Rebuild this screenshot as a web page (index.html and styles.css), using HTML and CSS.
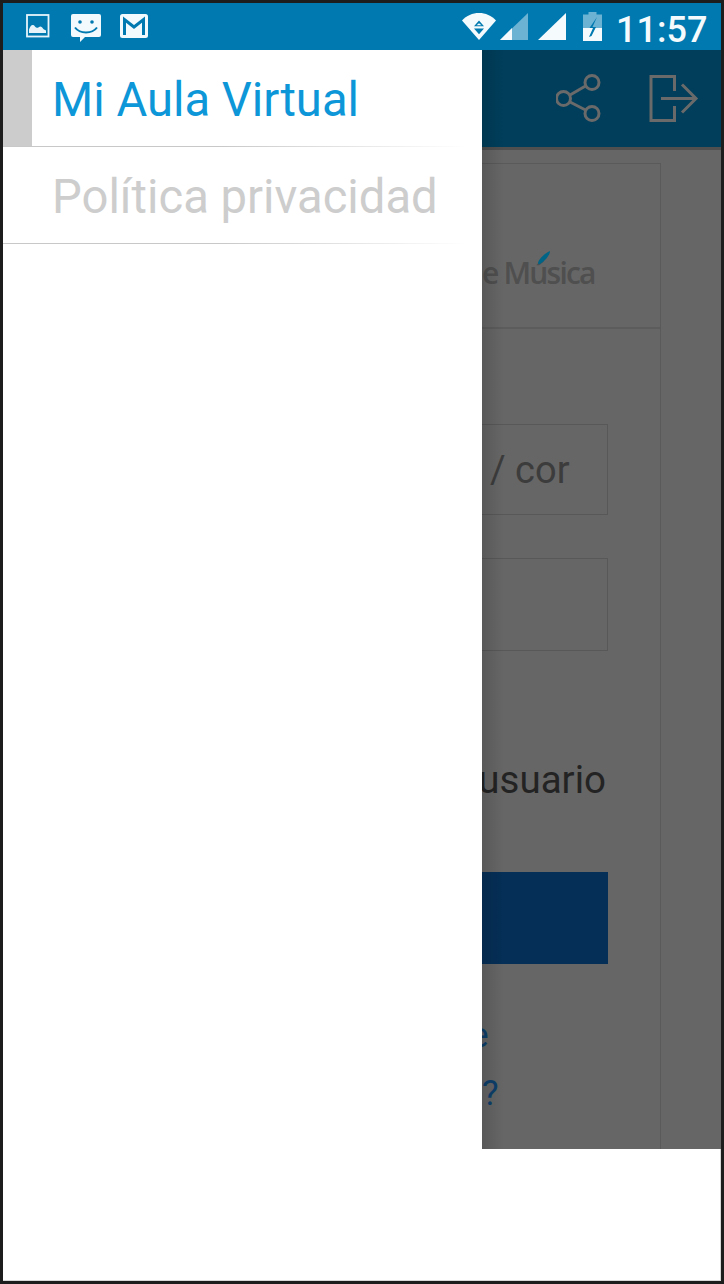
FILE: index.html
```html
<!DOCTYPE html>
<html lang="es">
<head>
<meta charset="utf-8">
<title>Mi Aula Virtual</title>
<link rel="stylesheet" href="styles.css">
</head>
<body>
<div class="frame">
  <header class="statusbar">
    <div class="status-left">
      <svg class="ic-picture" width="24" height="24" viewBox="0 0 24 24"><rect x="1" y="1" width="21.5" height="21.5" fill="none" stroke="#e6f4fa" stroke-width="1.8"/><path d="M3 19v-3.500c1-3 2.500-5 4.200-4.500 1.600.5 2 2.500 3.500 2.800 1.500.3 2.300-1.300 3.800-1.300 1.700 0 2.300 2.500 3.500 3 .8.300 1.500.5 2 1V19z" fill="#e6f4fa"/></svg>
      <svg class="ic-chat" width="30" height="28" viewBox="0 0 30 28"><path d="M2 0h26a2 2 0 0 1 2 2v19a2 2 0 0 1-2 2H14l-5 5v-5H2a2 2 0 0 1-2-2V2a2 2 0 0 1 2-2z" fill="#f2fafd"/><circle cx="9" cy="8" r="1.800" fill="#0079b0"/><circle cx="21" cy="8" r="1.800" fill="#0079b0"/><path d="M4 13.500c3 4 7 5 11 5s8-1 11-5" fill="none" stroke="#0079b0" stroke-width="2"/></svg>
      <svg class="ic-mail" width="28" height="24" viewBox="0 0 28 24"><rect width="28" height="24" rx="2.500" fill="#f2fafd"/><path d="M4.500 21V5.500L14 13l9.500-7.500V21" fill="none" stroke="#0079b0" stroke-width="3"/></svg>
    </div>
    <div class="status-right">
      <svg class="ic-wifi" width="34" height="27" viewBox="0 0 34 27"><path d="M0 7.500C4.500 2.500 10.500 0 17 0s12.500 2.500 17 7.500L17 27z" fill="#f5fbfd"/><path d="M17 7.500l5 5.800H12zM12 15.500h10l-5 5.800z" fill="#0079b0"/><path d="M17 10.300l2.500 2H14.500z" fill="#f5fbfd"/></svg>
      <svg class="ic-signal-a" width="28" height="27" viewBox="0 0 28 27"><path d="M28 0v27H0z" fill="#6cb3d3"/><path d="M12 15v12H0z" fill="#f5fbfd"/></svg>
      <svg class="ic-signal-b" width="28" height="27" viewBox="0 0 28 27"><path d="M28 0v27H0z" fill="#f5fbfd"/></svg>
      <svg class="ic-battery" width="19" height="29" viewBox="0 0 19 29"><path d="M5.500 0h8v2.500H19V16H0V2.500h5.500z" fill="#6cb3d3"/><path d="M0 16h19v13H0z" fill="#f5fbfd"/><path d="M14 5L6.500 16H10L6 25l2.500-1L13 15H9.500z" fill="#0079b0"/></svg>
      <span class="clock">11:57</span>
    </div>
  </header>
  <div class="main">
    <nav class="drawer">
      <a class="drawer-item is-active"><span class="drawer-mark"></span><span class="drawer-label">Mi Aula Virtual</span></a>
      <a class="drawer-item"><span class="drawer-label">Política privacidad</span></a>
    </nav>
    <section class="pane">
      <div class="appbar">
        <svg class="ic-share" width="46" height="50" viewBox="0 0 46 50"><g fill="none" stroke="#6a6a6a" stroke-width="3"><circle cx="36" cy="8.500" r="7"/><circle cx="7.500" cy="24.500" r="7"/><circle cx="36" cy="39.500" r="7"/><path d="M14 21L29.500 12M14 28L29.500 36"/></g></svg>
        <svg class="ic-exit" width="50" height="50" viewBox="0 0 50 50"><g fill="none" stroke="#6a6a6a" stroke-width="3"><path d="M25.500 17V2.500H2v44h23.500V32"/><path d="M12 24.500h35M33 10.500l14 14-14 14"/></g></svg>
      </div>
      <div class="appbar-edge"></div>
      <div class="page">
        <div class="card">
          <div class="card-head">
            <span class="logo">e Música<svg class="logo-accent" width="14" height="14" viewBox="0 0 14 14"><path d="M13 0c0 4-5 10-10 13-3 1-2-3 0-5 2-3 6-6 10-8z" fill="#006486"/></svg></span>
          </div>
          <div class="card-body">
            <div class="field field-user"><span class="field-text">/ cor</span></div>
            <div class="field field-pass"></div>
            <div class="remember"><span>usuario</span></div>
            <div class="submit"></div>
            <div class="forgot">
              <a class="forgot-a">e</a>
              <a class="forgot-b">?</a>
            </div>
          </div>
        </div>
      </div>
    </section>
  </div>
  <div class="blank"></div>
</div>
</body>
</html>
```
FILE: styles.css
```css
* { box-sizing: border-box; }
html, body { margin: 0; padding: 0; }
body { width: 724px; height: 1284px; font-family: Roboto, "Liberation Sans", sans-serif; background: #1d1d1d; overflow: hidden; }

.frame { width: 724px; height: 1284px; border: 3px solid #1d1d1d; display: flex; flex-direction: column; background: #fff; }

.statusbar { height: 47px; flex: none; background: #0079b0; display: flex; justify-content: space-between; align-items: flex-start; }
.status-left { display: flex; padding: 11px 0 0 23px; }
.ic-chat { margin-left: 21px; }
.ic-mail { margin-left: 19px; }
.status-right { display: flex; align-items: flex-start; padding: 10px 15px 0 0; }
.ic-signal-a { margin-left: 4px; }
.ic-signal-b { margin-left: 10px; }
.ic-battery { margin: -1px 0 0 17px; }
.clock { margin-left: 14px; width: 90px; color: #f5fbfd; font-size: 36px; font-weight: 500; line-height: 34px; white-space: nowrap; }

.main { height: 1099px; flex: none; display: flex; }
.drawer { width: 479px; flex: none; background: #fff; position: relative; z-index: 1; }
.drawer-item { display: flex; height: 97px; position: relative; align-items: center; font-size: 47.200px; color: #cdcdcd; white-space: nowrap; }
.drawer-item::after { content: ""; position: absolute; left: 0; right: 0; bottom: 0; height: 1px; background: linear-gradient(to right, #c8c8c8 45%, #fff 97%); }
.is-active { color: #0d96d8; }
.drawer-mark { width: 29px; height: 96px; align-self: flex-start; background: #cccccc; }
.drawer-label { padding-left: 49px; padding-top: 2px; }
.is-active .drawer-label { padding-left: 20px; }

.pane { flex: 1; min-width: 0; display: flex; flex-direction: column; background: #666; position: relative; overflow: hidden; }
.pane::after { content: ""; position: absolute; left: 0; top: 0; bottom: 0; width: 22px; background: linear-gradient(to right, rgba(0,0,0,.13), rgba(0,0,0,0)); }

.appbar { height: 97px; flex: none; background: #003e5b; display: flex; align-items: center; padding: 0 22px 0 74px; justify-content: space-between; }
.appbar-edge { height: 3px; flex: none; background: #4f4f4f; }

.page { flex: 1; padding: 13px 60px 0 0; display: flex; min-height: 0; min-width: 0; }
.card { flex: 1; min-width: 0; display: flex; flex-direction: column; border: 1px solid #5a5a5a; border-left: 0; border-bottom: 0; }
.card-head { height: 165px; flex: none; border-bottom: 2px solid #5c5c5c; display: flex; align-items: flex-end; padding-bottom: 33px; }
.logo { position: relative; font-family: "Open Sans", Lato, sans-serif; font-size: 30px; line-height: 42px; color: #4f4f4f; letter-spacing: -1.800px; white-space: nowrap; font-weight: 600; }
.logo-accent { position: absolute; left: 55px; top: -1px; }

.card-body { flex: 1; min-width: 0; display: flex; flex-direction: column; padding: 95px 52px 0 0; }
.field { border: 1px solid #585858; border-left: 0; display: flex; align-items: center; }
.field-user { height: 91px; padding-left: 8px; }
.field-pass { height: 93px; margin-top: 43px; }
.field-text { font-size: 38px; color: #3c3c3c; }
.remember { margin-top: 106px; padding-right: 2px; display: flex; justify-content: flex-end; font-size: 38.500px; line-height: 46px; color: #232323; white-space: nowrap; }
.submit { height: 92px; margin-top: 69px; background: #052f57; }
.forgot { display: flex; flex-direction: column; margin-top: 43px; font-size: 35px; line-height: 58px; color: #0d3f6b; }
.forgot-a { margin-left: -12px; }
.forgot-b { margin-left: 0; }
.blank { flex: 1; border-bottom: 1px solid #d8d8d8; border-right: 1px solid #d8d8d8; }
```
